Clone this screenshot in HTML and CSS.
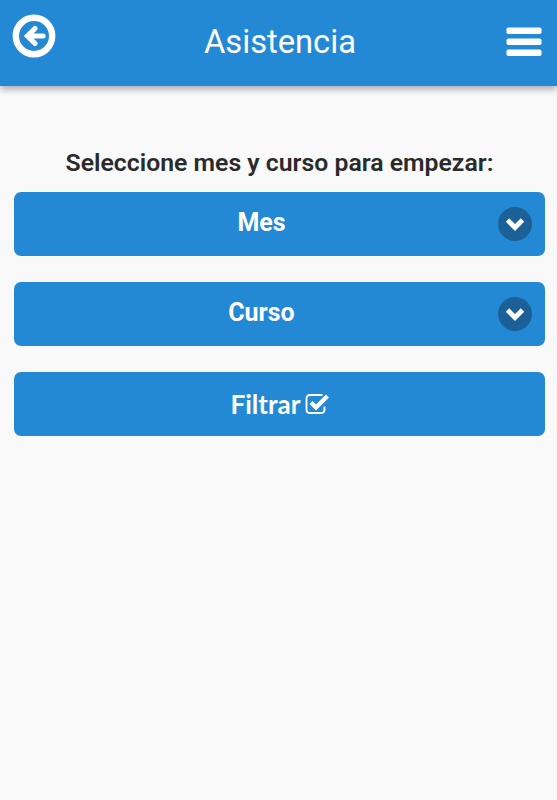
FILE: index.html
```html
<!DOCTYPE html>
<html lang="es">
<head>
<meta charset="utf-8">
<title>Asistencia</title>
<link rel="stylesheet" href="styles.css">
</head>
<body>
<header class="bar">
  <button class="icon-button" aria-label="Volver">
    <svg width="44" height="44" viewBox="0 0 44 44" fill="none" stroke="currentColor">
      <circle cx="22" cy="22" r="18.2" stroke-width="6.4"/>
      <path d="M23 14.500 15.500 22l7.500 7.500M16.500 22H31" stroke-width="5.200" stroke-linecap="round"/>
    </svg>
  </button>
  <h1 class="title">Asistencia</h1>
  <button class="icon-button menu" aria-label="Menú">
    <svg width="36" height="30" viewBox="0 0 36 30" fill="currentColor">
      <rect x=".5" y=".5" width="35" height="6.500" rx="1.800"/>
      <rect x=".5" y="11.500" width="35" height="6.500" rx="1.800"/>
      <rect x=".5" y="22.500" width="35" height="6.500" rx="1.800"/>
    </svg>
  </button>
</header>
<main class="content">
  <h2 class="prompt">Seleccione mes y curso para empezar:</h2>
  <button class="field select">
    <span class="label">Mes</span>
    <span class="arrow"><svg width="20" height="14" viewBox="0 0 20 14"><path d="M2.500 3 10 10.500 17.500 3" fill="none" stroke="currentColor" stroke-width="4.800"/></svg></span>
  </button>
  <button class="field select">
    <span class="label">Curso</span>
    <span class="arrow"><svg width="20" height="14" viewBox="0 0 20 14"><path d="M2.500 3 10 10.500 17.500 3" fill="none" stroke="currentColor" stroke-width="4.800"/></svg></span>
  </button>
  <button class="field submit">
    <span>Filtrar</span>
    <svg width="25" height="22" viewBox="0 0 25 22" fill="none" stroke="currentColor">
      <path d="M17.500 2H5Q1.500 2 1.500 5.500V16.500Q1.500 20 5 20H16Q19.500 20 19.500 16.500V13.500" stroke-width="1.900"/>
      <path d="M6 9.500 11 14.500 22.500 3" stroke-width="4.200"/>
    </svg>
  </button>
</main>
</body>
</html>
```
FILE: styles.css
```css
* { box-sizing: border-box; }

body {
  margin: 0;
  min-height: 100vh;
  background: #f9f9f9;
  font-family: Roboto, sans-serif;
  color: #2a2a2a;
}

button {
  border: 0;
  padding: 0;
  background: none;
  color: #fff;
  font: inherit;
}

.bar {
  display: flex;
  align-items: flex-start;
  justify-content: space-between;
  height: 86px;
  padding: 14px 15px 0 12px;
  background: #2389d5;
  box-shadow: 0 3px 7px rgba(50, 40, 60, .4);
  color: #fff;
}

.icon-button { display: flex; }

.menu { margin-top: 13px; }

.title {
  margin: 8px 2px 0 0;
  font-size: 32.700px;
  line-height: 40px;
  font-weight: 400;
}

.content {
  display: flex;
  flex-direction: column;
  gap: 26px;
  padding: 60px 12px 0 14px;
}

.prompt {
  margin: 0 0 -26px;
  height: 46px;
  line-height: 34px;
  font-size: 24.800px;
  font-weight: 600;
  text-align: center;
  white-space: nowrap;
}

.field {
  display: flex;
  align-items: center;
  height: 64px;
  border-radius: 7px;
  background: #2389d5;
  font-size: 25px;
  font-weight: 700;
}

.select { padding-right: 13px; }

.label {
  flex: 1;
  padding: 0 0 3px 11px;
  text-align: center;
}

.arrow {
  display: flex;
  align-items: center;
  justify-content: center;
  width: 34px;
  height: 34px;
  padding-bottom: 1px;
  border-radius: 50%;
  background: #1b6197;
}

.submit {
  justify-content: center;
  gap: 5px;
  padding: 0 0 1px 2px;
  font-family: Lato, sans-serif;
  font-size: 26px;
}
```
